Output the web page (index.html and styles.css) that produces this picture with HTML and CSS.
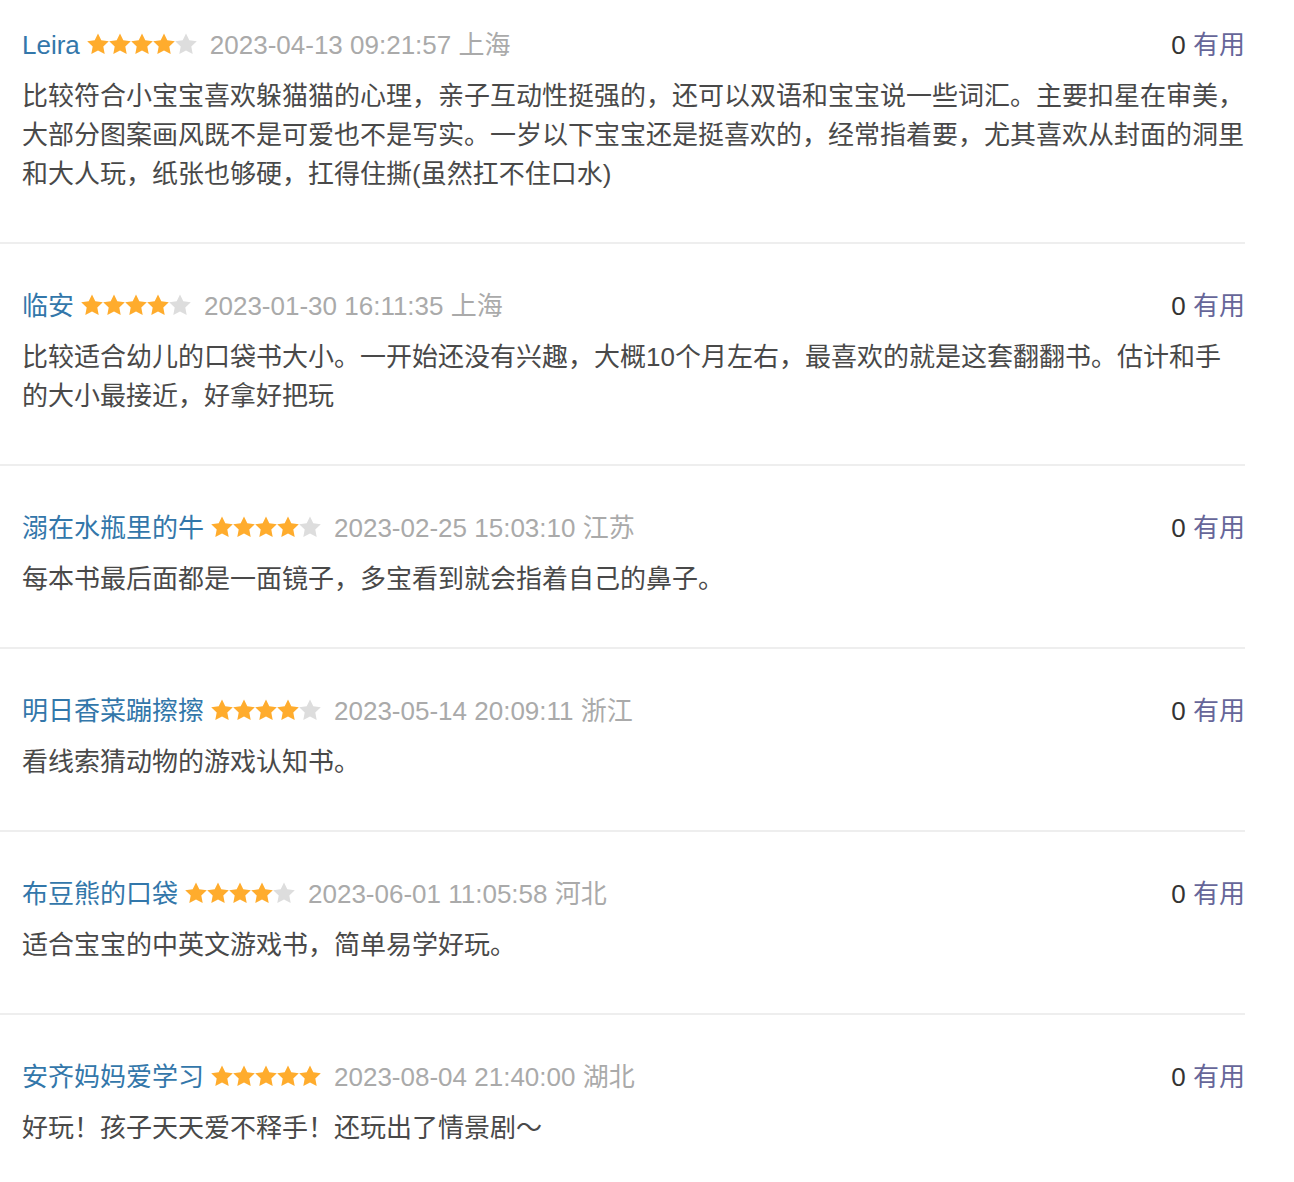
FILE: index.html
```html
<!DOCTYPE html>
<html lang="zh-CN">
<head>
<meta charset="utf-8">
<title>短评</title>
<link rel="stylesheet" href="styles.css">
</head>
<body>
<svg width="0" height="0" class="defs" aria-hidden="true">
  <defs>
    <polygon id="star" points="11,0.4 14.3,7.3 21.8,8.3 16.3,13.5 17.7,21 11,17.4 4.3,21 5.7,13.5 0.2,8.3 7.7,7.3"/>
  </defs>
</svg>
<div class="list">
  <div class="review">
    <div class="head">
      <div class="info">
        <a class="name">Leira</a>
        <svg class="stars" width="110" height="22" viewBox="0 0 110 22"><use href="#star" x="0" class="on"/><use href="#star" x="22" class="on"/><use href="#star" x="44" class="on"/><use href="#star" x="66" class="on"/><use href="#star" x="88" class="off"/></svg>
        <span class="time">2023-04-13 09:21:57 上海</span>
      </div>
      <div class="vote"><span class="count">0</span> <a class="useful">有用</a></div>
    </div>
    <p class="text">比较符合小宝宝喜欢躲猫猫的心理，亲子互动性挺强的，还可以双语和宝宝说一些词汇。主要扣星在审美，大部分图案画风既不是可爱也不是写实。一岁以下宝宝还是挺喜欢的，经常指着要，尤其喜欢从封面的洞里和大人玩，纸张也够硬，扛得住撕(虽然扛不住口水)</p>
  </div>
  <div class="review">
    <div class="head">
      <div class="info">
        <a class="name">临安</a>
        <svg class="stars" width="110" height="22" viewBox="0 0 110 22"><use href="#star" x="0" class="on"/><use href="#star" x="22" class="on"/><use href="#star" x="44" class="on"/><use href="#star" x="66" class="on"/><use href="#star" x="88" class="off"/></svg>
        <span class="time">2023-01-30 16:11:35 上海</span>
      </div>
      <div class="vote"><span class="count">0</span> <a class="useful">有用</a></div>
    </div>
    <p class="text">比较适合幼儿的口袋书大小。一开始还没有兴趣，大概10个月左右，最喜欢的就是这套翻翻书。估计和手的大小最接近，好拿好把玩</p>
  </div>
  <div class="review">
    <div class="head">
      <div class="info">
        <a class="name">溺在水瓶里的牛</a>
        <svg class="stars" width="110" height="22" viewBox="0 0 110 22"><use href="#star" x="0" class="on"/><use href="#star" x="22" class="on"/><use href="#star" x="44" class="on"/><use href="#star" x="66" class="on"/><use href="#star" x="88" class="off"/></svg>
        <span class="time">2023-02-25 15:03:10 江苏</span>
      </div>
      <div class="vote"><span class="count">0</span> <a class="useful">有用</a></div>
    </div>
    <p class="text">每本书最后面都是一面镜子，多宝看到就会指着自己的鼻子。</p>
  </div>
  <div class="review">
    <div class="head">
      <div class="info">
        <a class="name">明日香菜蹦擦擦</a>
        <svg class="stars" width="110" height="22" viewBox="0 0 110 22"><use href="#star" x="0" class="on"/><use href="#star" x="22" class="on"/><use href="#star" x="44" class="on"/><use href="#star" x="66" class="on"/><use href="#star" x="88" class="off"/></svg>
        <span class="time">2023-05-14 20:09:11 浙江</span>
      </div>
      <div class="vote"><span class="count">0</span> <a class="useful">有用</a></div>
    </div>
    <p class="text">看线索猜动物的游戏认知书。</p>
  </div>
  <div class="review">
    <div class="head">
      <div class="info">
        <a class="name">布豆熊的口袋</a>
        <svg class="stars" width="110" height="22" viewBox="0 0 110 22"><use href="#star" x="0" class="on"/><use href="#star" x="22" class="on"/><use href="#star" x="44" class="on"/><use href="#star" x="66" class="on"/><use href="#star" x="88" class="off"/></svg>
        <span class="time">2023-06-01 11:05:58 河北</span>
      </div>
      <div class="vote"><span class="count">0</span> <a class="useful">有用</a></div>
    </div>
    <p class="text">适合宝宝的中英文游戏书，简单易学好玩。</p>
  </div>
  <div class="review last">
    <div class="head">
      <div class="info">
        <a class="name">安齐妈妈爱学习</a>
        <svg class="stars" width="110" height="22" viewBox="0 0 110 22"><use href="#star" x="0" class="on"/><use href="#star" x="22" class="on"/><use href="#star" x="44" class="on"/><use href="#star" x="66" class="on"/><use href="#star" x="88" class="on"/></svg>
        <span class="time">2023-08-04 21:40:00 湖北</span>
      </div>
      <div class="vote"><span class="count">0</span> <a class="useful">有用</a></div>
    </div>
    <p class="text">好玩！孩子天天爱不释手！还玩出了情景剧～</p>
  </div>
</div>
</body>
</html>
```

FILE: styles.css
```css
html, body {
  margin: 0;
  padding: 0;
  background: #fff;
}

body {
  font-family: "Liberation Sans", "Noto Sans CJK SC", sans-serif;
  font-size: 26px;
  line-height: 39px;
  color: #494949;
}

.defs {
  position: absolute;
  width: 0;
  height: 0;
  overflow: hidden;
}

.list {
  width: 1245px;
}

.review {
  padding: 43px 0 48px 22px;
  border-bottom: 2px solid #eeeeee;
}

.review:first-child {
  padding-top: 26px;
}

.review.last {
  border-bottom: none;
}

.head {
  display: flex;
  justify-content: space-between;
  align-items: center;
  height: 39px;
}

.info {
  display: flex;
  align-items: center;
  white-space: nowrap;
}

.name {
  color: #3377aa;
  text-decoration: none;
}

.stars {
  display: block;
  margin-left: 7px;
  margin-top: -3px;
}

.stars .on {
  fill: #ffac2d;
}

.stars .off {
  fill: #dddddd;
}

.time {
  color: #aaaaaa;
  margin-left: 13px;
}

.vote {
  white-space: nowrap;
}

.count {
  color: #333333;
}

.useful {
  color: #666699;
  text-decoration: none;
}

.text {
  margin: 12px 0 0 0;
  word-break: normal;
}
```
